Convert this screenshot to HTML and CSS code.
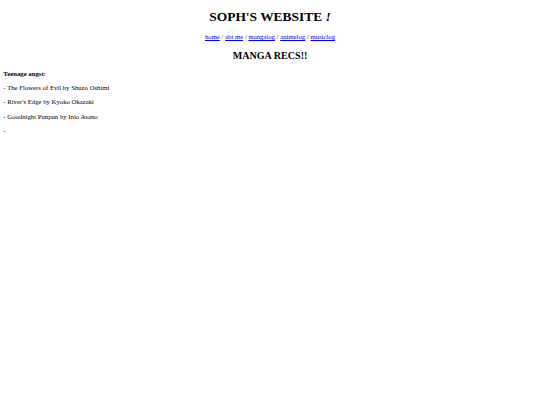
FILE: index.html
```html
<!DOCTYPE html>
<html>
<head>
<meta charset="utf-8">
<link rel="stylesheet" href="styles.css">
</head>
<body>
<h1 class="title">SOPH'S WEBSITE <i>!</i></h1>
<p class="nav"><a href="#">home</a> / <a href="#">abt me</a> / <a href="#">mangalog</a> / <a href="#">animelog</a> / <a href="#">musiclog</a></p>
<h2 class="sub">MANGA RECS!!</h2>
<p class="line"><b>Teenage angst:</b></p>
<p class="line">- The Flowers of Evil by Shuzo Oshimi</p>
<p class="line">- River's Edge by Kyoko Okazaki</p>
<p class="line">- Goodnight Punpun by Inio Asano</p>
<p class="line">-</p>
</body>
</html>
```
FILE: styles.css
```css
html, body {
  background: #fff;
}
body {
  margin: 3.36px;
  font-family: "Liberation Serif", "Times New Roman", serif;
  font-size: 6.72px;
  color: #000;
}
.title {
  font-size: 2em;
  margin: 6px 0 8px;
  text-align: center;
  font-weight: bold;
}
.nav {
  margin: 6.7px 0;
  text-align: center;
}
.nav a {
  color: #00e;
}
.sub {
  font-size: 1.5em;
  margin: 9.9px 0 8.4px;
  text-align: center;
}
.line {
  margin: 7.3px 0;
}
```
